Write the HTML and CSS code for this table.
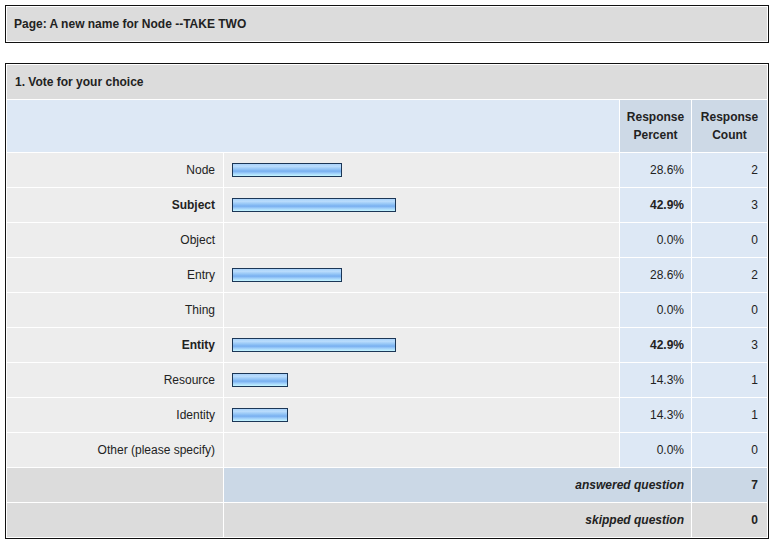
FILE: index.html
```html
<!DOCTYPE html>
<html>
<head>
<meta charset="utf-8">
<link rel="stylesheet" href="styles.css">
</head>
<body>
<div class="page-box">
  <div class="page-title">Page: A new name for Node --TAKE TWO</div>
</div>
<div class="q-box">
  <table class="q-table">
    <colgroup>
      <col class="c-label"><col class="c-bar"><col class="c-pct"><col class="c-cnt">
    </colgroup>
    <tr><td class="q-title" colspan="4">1. Vote for your choice</td></tr>
    <tr class="head">
      <td class="head-blank" colspan="2"></td>
      <td class="head-cell">Response<br>Percent</td>
      <td class="head-cell">Response<br>Count</td>
    </tr>
    <tr class="row"><td class="label">Node</td><td class="bar-cell"><div class="bar" style="width:108px"></div></td><td class="pct">28.6%</td><td class="cnt">2</td></tr>
    <tr class="row max"><td class="label">Subject</td><td class="bar-cell"><div class="bar" style="width:162px"></div></td><td class="pct">42.9%</td><td class="cnt">3</td></tr>
    <tr class="row"><td class="label">Object</td><td class="bar-cell"></td><td class="pct">0.0%</td><td class="cnt">0</td></tr>
    <tr class="row"><td class="label">Entry</td><td class="bar-cell"><div class="bar" style="width:108px"></div></td><td class="pct">28.6%</td><td class="cnt">2</td></tr>
    <tr class="row"><td class="label">Thing</td><td class="bar-cell"></td><td class="pct">0.0%</td><td class="cnt">0</td></tr>
    <tr class="row max"><td class="label">Entity</td><td class="bar-cell"><div class="bar" style="width:162px"></div></td><td class="pct">42.9%</td><td class="cnt">3</td></tr>
    <tr class="row"><td class="label">Resource</td><td class="bar-cell"><div class="bar" style="width:54px"></div></td><td class="pct">14.3%</td><td class="cnt">1</td></tr>
    <tr class="row"><td class="label">Identity</td><td class="bar-cell"><div class="bar" style="width:54px"></div></td><td class="pct">14.3%</td><td class="cnt">1</td></tr>
    <tr class="row"><td class="label">Other (please specify)</td><td class="bar-cell"></td><td class="pct">0.0%</td><td class="cnt">0</td></tr>
    <tr class="foot answered"><td class="foot-blank"></td><td class="foot-label" colspan="2">answered question</td><td class="foot-val">7</td></tr>
    <tr class="foot skipped"><td class="foot-blank"></td><td class="foot-label" colspan="2">skipped question</td><td class="foot-val">0</td></tr>
  </table>
</div>
</body>
</html>
```
FILE: styles.css
```css
html, body {
  margin: 0;
  padding: 0;
  background: #ffffff;
}
body {
  padding: 5px 0 0 5px;
  font-family: "Liberation Sans", Arial, sans-serif;
  font-size: 12px;
  color: #222;
}
.page-box {
  width: 762px;
  border: 1px solid #111;
  padding: 1px;
  box-sizing: border-box;
  width: 764px;
}
.page-title {
  background: #dcdcdc;
  height: 34px;
  line-height: 34px;
  padding-left: 7px;
  font-weight: bold;
}
.q-box {
  margin-top: 20px;
  width: 764px;
  box-sizing: border-box;
  border: 1px solid #111;
}
.q-table {
  border-collapse: separate;
  border-spacing: 1px;
  width: 762px;
  table-layout: fixed;
}
.c-label { width: 216px; }
.c-bar { width: 395px; }
.c-pct { width: 71px; }
.c-cnt { width: 75px; }
.q-table td {
  padding: 0;
}
.q-title {
  background: #dcdcdc;
  height: 34px;
  font-weight: bold;
  padding-left: 8px !important;
}
.head td {
  height: 52px;
}
.head-blank {
  background: #dde8f5;
}
.head-cell {
  background: #cdd9e6;
  font-weight: bold;
  text-align: center;
  line-height: 18px;
}
.row td {
  height: 34px;
}
.label {
  background: #ededed;
  text-align: right;
  padding-right: 8px !important;
}
.bar-cell {
  background: #ededed;
  padding-left: 8px !important;
}
.bar {
  height: 12px;
  border: 1px solid #1b3656;
  background: linear-gradient(to bottom, #a9d2fb 0%, #b9dcfc 20%, #8fc2f5 45%, #78aff0 60%, #a4d3fb 80%, #c4f6ff 100%);
}
.pct {
  background: #dde8f5;
  text-align: right;
  padding-right: 7px !important;
}
.cnt {
  background: #dde8f5;
  text-align: right;
  padding-right: 9px !important;
}
.max .label, .max .pct {
  font-weight: bold;
}
.foot td {
  height: 34px;
}
.foot-blank {
  background: #dcdcdc;
}
.foot-label {
  text-align: right;
  font-weight: bold;
  font-style: italic;
  padding-right: 7px !important;
}
.foot-val {
  text-align: right;
  font-weight: bold;
  padding-right: 9px !important;
}
.answered .foot-label, .answered .foot-val {
  background: #cbd8e6;
}
.skipped .foot-label, .skipped .foot-val {
  background: #dcdcdc;
}
```
